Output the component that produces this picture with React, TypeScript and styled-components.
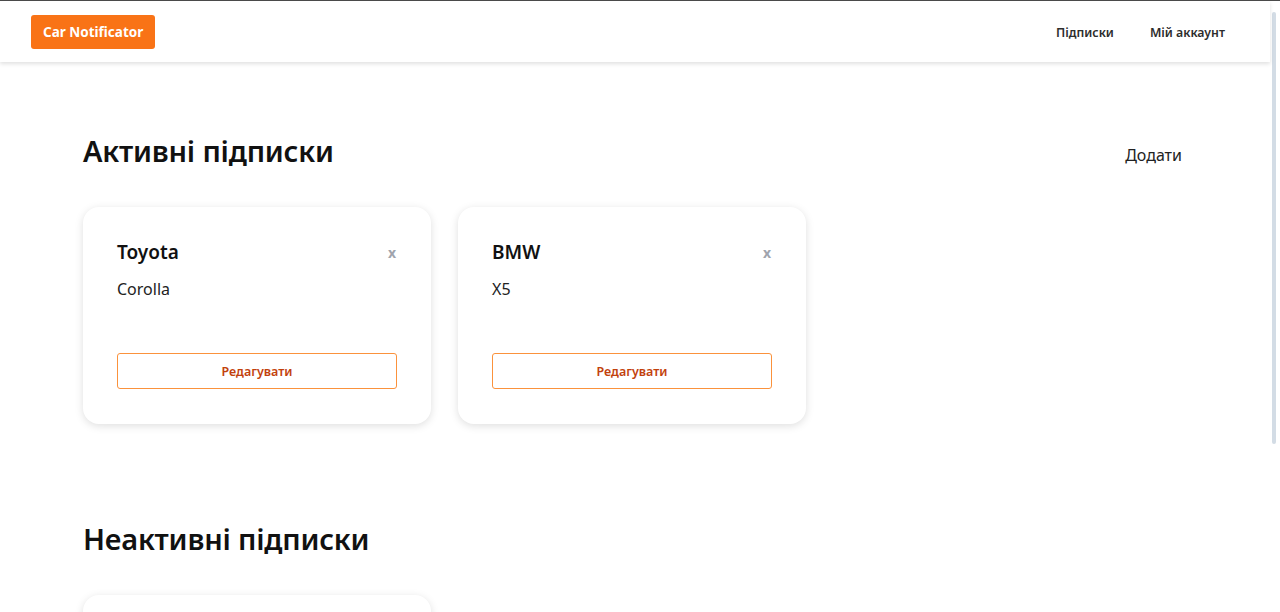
import React from "react";
import styled, { createGlobalStyle } from "styled-components";

const Global = createGlobalStyle`
  html, body { margin: 0; padding: 0; overflow: hidden; background: #fff; }
  body { font-family: "Noto Sans", "Open Sans", sans-serif; color: #111; }
  * { box-sizing: border-box; }
`;

const Shell = styled.div`
  display: flex;
  height: 612px;
  border-top: 1px solid #4a4a4a;
  overflow: hidden;
`;

const Page = styled.div`
  flex: 1;
  display: flex;
  flex-direction: column;
  min-width: 0;
`;

const Gutter = styled.div`
  width: 10px;
  flex-shrink: 0;
  padding: 11px 4px 0 2px;
`;

const Thumb = styled.div`
  width: 4px;
  height: 432px;
  background: #d3dce5;
  border-radius: 2px;
`;

const Header = styled.header`
  flex-shrink: 0;
  height: 61px;
  display: flex;
  align-items: center;
  justify-content: space-between;
  padding: 0 45px 0 31px;
  box-shadow: 0 2px 4px rgba(0, 0, 0, 0.12);
  background: #fff;
  position: relative;
  z-index: 1;
`;

const Logo = styled.button`
  background: #f97316;
  color: #fff;
  border: none;
  border-radius: 3px;
  height: 34px;
  padding: 0 12px;
  font-family: inherit;
  font-size: 13.5px;
  font-weight: 700;
  margin-top: 1px;
`;

const Nav = styled.nav`
  display: flex;
  gap: 36px;
  margin-top: 1px;
`;

const NavLink = styled.a`
  font-size: 12.3px;
  font-weight: 600;
  color: #2d2d2d;
  text-decoration: none;
`;

const Main = styled.main`
  flex-shrink: 0;
  padding: 68px 88px 0 83px;
  display: flex;
  flex-direction: column;
`;

const SectionHead = styled.div`
  display: flex;
  justify-content: space-between;
  align-items: center;
  height: 40px;
`;

const Title = styled.h2`
  margin: 0;
  font-size: 29px;
  font-weight: 600;
  color: #111;
  letter-spacing: -0.2px;
`;

const AddLink = styled.a`
  font-size: 16px;
  color: #222;
  margin-top: 9px;
`;

const Cards = styled.div`
  display: flex;
  gap: 27px;
  margin-top: 37px;
`;

const Card = styled.div`
  flex-shrink: 0;
  width: 348px;
  height: 217px;
  border-radius: 16px;
  background: #fff;
  box-shadow: 0 2px 8px rgba(0, 0, 0, 0.13);
  padding: 32px 34px 35px;
  display: flex;
  flex-direction: column;
`;

const CardTop = styled.div`
  display: flex;
  justify-content: space-between;
  align-items: center;
`;

const Brand = styled.div`
  font-size: 19px;
  font-weight: 600;
  color: #111;
`;

const Close = styled.span`
  color: #a0a4ad;
  font-size: 14px;
  font-weight: 700;
  margin-right: 1px;
`;

const Model = styled.div`
  font-size: 16px;
  color: #222;
  margin-top: 13px;
`;

const EditButton = styled.button`
  margin-top: auto;
  height: 36px;
  width: 100%;
  background: #fff;
  border: 1px solid #fb923c;
  border-radius: 3px;
  color: #c2410c;
  font-family: inherit;
  font-size: 12.5px;
  font-weight: 600;
`;

const Section = styled.section<{ $top?: number }>`
  margin-top: ${(p) => p.$top ?? 0}px;
`;

const subs = [
  { brand: "Toyota", model: "Corolla" },
  { brand: "BMW", model: "X5" },
];

export default function App() {
  return (
    <>
      <Global />
      <Shell>
        <Page>
          <Header>
            <Logo>Car Notificator</Logo>
            <Nav>
              <NavLink>Підписки</NavLink>
              <NavLink>Мій аккаунт</NavLink>
            </Nav>
          </Header>
          <Main>
            <Section>
              <SectionHead>
                <Title>Активні підписки</Title>
                <AddLink>Додати</AddLink>
              </SectionHead>
              <Cards>
                {subs.map((s) => (
                  <Card key={s.brand}>
                    <CardTop>
                      <Brand>{s.brand}</Brand>
                      <Close>x</Close>
                    </CardTop>
                    <Model>{s.model}</Model>
                    <EditButton>Редагувати</EditButton>
                  </Card>
                ))}
              </Cards>
            </Section>
            <Section $top={94}>
              <SectionHead>
                <Title>Неактивні підписки</Title>
              </SectionHead>
              <Cards>
                <Card />
              </Cards>
            </Section>
          </Main>
        </Page>
        <Gutter>
          <Thumb />
        </Gutter>
      </Shell>
    </>
  );
}
